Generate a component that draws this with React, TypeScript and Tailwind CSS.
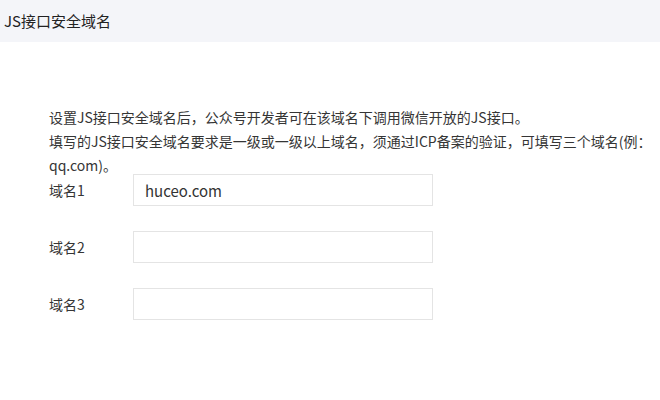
export default function App() {
    const rows = [
        { label: "域名1", value: "huceo.com" },
        { label: "域名2", value: "" },
        { label: "域名3", value: "" },
    ];

    return (
        <div
            className="w-[660px] h-[400px] bg-white text-[#353535]"
            style={{ fontFamily: '"Noto Sans CJK SC", "Microsoft YaHei", sans-serif' }}
        >
            <header className="h-[42px] bg-[#f4f5f9] flex items-center px-[4px]">
                <span className="text-[15px] text-[#222]">JS接口安全域名</span>
            </header>
            <div className="pl-[49px] pr-[6px] pt-[63px]">
                <p className="text-[14px] leading-[24px]">
                    设置JS接口安全域名后，公众号开发者可在该域名下调用微信开放的JS接口。
                    <br />
                    填写的JS接口安全域名要求是一级或一级以上域名，须通过ICP备案的验证，可填写三个域名(例：qq.com)。
                </p>
                <div className="flex flex-col gap-[25px] -mt-[3px]">
                    {rows.map((r) => (
                        <div key={r.label} className="flex items-center">
                            <label className="w-[84px] text-[14px]">{r.label}</label>
                            <input
                                readOnly
                                value={r.value}
                                className="w-[300px] h-[32px] border border-[#e4e4e4] px-[11px] text-[15px] text-[#333] outline-none"
                                style={{ fontFamily: '"Noto Sans CJK SC", "Microsoft YaHei", sans-serif' }}
                            />
                        </div>
                    ))}
                </div>
            </div>
        </div>
    );
}
